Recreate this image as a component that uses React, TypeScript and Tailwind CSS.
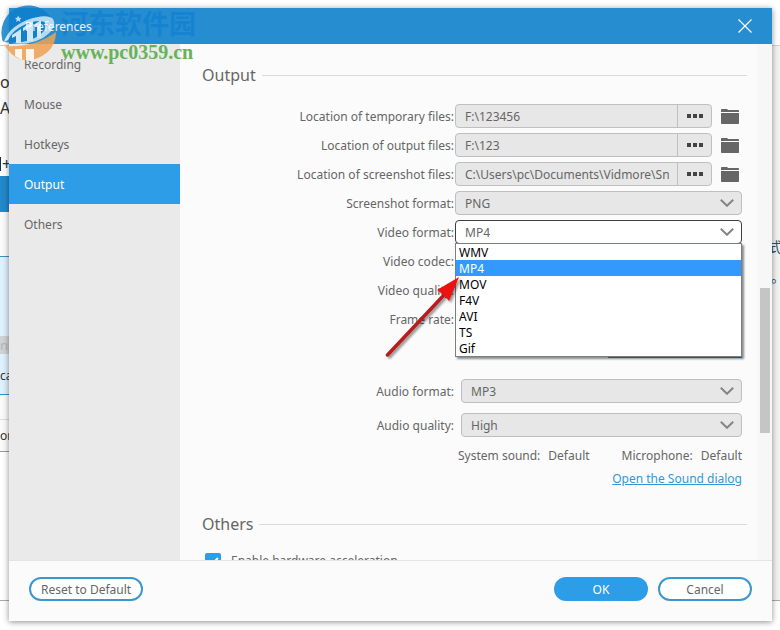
import { useState } from "react";
import type { ReactNode } from "react";

const tabs = ["Recording", "Mouse", "Hotkeys", "Output", "Others"];

const locations = [
  { id: "temp", label: "Location of temporary files:", path: "F:\\123456" },
  { id: "output", label: "Location of output files:", path: "F:\\123" },
  {
    id: "shots",
    label: "Location of screenshot files:",
    path: "C:\\Users\\pc\\Documents\\Vidmore\\Snapshot",
  },
];

const videoFormats = ["WMV", "MP4", "MOV", "F4V", "AVI", "TS", "Gif"];

function Chevron() {
  return (
    <svg
      viewBox="0 0 14 8"
      className="pointer-events-none absolute top-2 right-2 h-2 w-3.5"
      fill="none"
      stroke="#858585"
      strokeWidth="2"
    >
      <path d="M0.8 0.8 7 6.8 13.2 0.8" />
    </svg>
  );
}

function FolderIcon() {
  return (
    <svg viewBox="0 0 18 15" className="h-[15px] w-[18px]" fill="#666666">
      <path d="M0 3V0.8Q0 0 0.8 0H6L7.2 1H17.2Q18 1 18 1.8V3Z" />
      <path d="M0 4h18v10.2q0 .8-.8.8H.8q-.8 0-.8-.8z" />
    </svg>
  );
}

function SectionTitle({ children }: { children: ReactNode }) {
  return (
    <div className="flex items-center gap-1.5 pr-2.5">
      <h2 className="text-[16px] leading-6">{children}</h2>
      <div className="h-px flex-1 bg-[#dadada]" />
    </div>
  );
}

type RowProps = { label: string; htmlFor: string; children?: ReactNode };

function Row({ label, htmlFor, children }: RowProps) {
  return (
    <div className="flex h-6 items-center">
      <label htmlFor={htmlFor} className="w-[252px] shrink-0 pt-0.5 text-right">
        {label}
      </label>
      {children}
    </div>
  );
}

type SelectProps = { id: string; options: string[]; value: string; open?: boolean };

function Select({ id, options, value, open }: SelectProps) {
  const [current, setCurrent] = useState(value);
  return (
    <div className="relative flex-1">
      <select
        id={id}
        value={current}
        onChange={(e) => setCurrent(e.target.value)}
        className={
          open
            ? "block h-6 w-full appearance-none rounded border border-[#3f3f3f] bg-white pt-0.5 pl-[9px] outline-none"
            : "block h-6 w-full appearance-none rounded border border-[#bfbfbf] bg-[#e7e7e7] pt-0.5 pl-[9px] outline-none"
        }
      >
        {options.map((o) => (
          <option key={o}>{o}</option>
        ))}
      </select>
      <Chevron />
      {open && (
        <ul
          role="listbox"
          className="absolute top-[23px] right-0 left-0 z-10 border border-[#7a7f86] bg-white text-black shadow-[2px_2px_2px_rgba(0,0,0,0.45)]"
        >
          {options.map((o) => (
            <li
              key={o}
              role="option"
              aria-selected={o === current}
              onClick={() => setCurrent(o)}
              className="h-4 pt-px pl-[3px] leading-4 aria-selected:bg-[#3399ff] aria-selected:text-white"
            >
              {o}
            </li>
          ))}
        </ul>
      )}
    </div>
  );
}

// Parts of the main window that stick out behind the dialog
function Backdrop() {
  return (
    <div className="absolute inset-0 overflow-hidden text-[13px] whitespace-nowrap text-[#333]">
      <div className="absolute inset-x-0 top-[45px] h-px bg-[#cfcfcf]" />
      <span className="absolute top-[72px] left-0 text-[16px] leading-5">o</span>
      <span className="absolute top-[98px] left-0 text-[16px] leading-5">A</span>
      <span className="absolute top-[154px] left-0.5 text-[16px] leading-5">+</span>
      <div className="absolute top-[157px] left-0 h-3.5 w-px bg-[#1d2b5c]" />
      <div className="absolute top-[176px] left-0 h-9 w-4 bg-[#2289cc]" />
      <div className="absolute top-[212px] left-0 h-[240px] w-4 border-b border-[#999] bg-[#fafafa]">
        <div className="mt-11 h-[139px] border-y border-[#3a8fc4] bg-[#def1fe]">
          <div className="mt-[79px] h-[18px] bg-[#cfd3d6] leading-[18px] text-[#b5b5b5]">nc</div>
          <div className="mt-3 text-[12px] leading-5">ca</div>
        </div>
        <div className="mt-6 border-t border-[#ddd] pt-1.5 text-[12px] leading-5">ord</div>
      </div>
      <div className="absolute inset-x-0 top-[600px] h-px bg-[#a9a9a9]" />
      <div className="absolute top-[46px] right-0 h-[554px] w-2 bg-[#f2f2f2]" />
      <span className="absolute top-[236px] left-[768px] font-['Noto_Sans_CJK_SC',sans-serif] text-[14px] leading-5 text-[#2f4f66]">
        式
      </span>
      <span className="absolute top-[266px] left-[771px] font-['Noto_Sans_CJK_SC',sans-serif] text-[14px] leading-5 text-[#2f4f66]">
        。
      </span>
    </div>
  );
}

function Watermark() {
  return (
    <div className="pointer-events-none absolute top-0 left-0 z-20">
      <svg viewBox="0 0 60 64" className="absolute top-0 left-0 h-16 w-[60px] opacity-85">
        <path d="M2 38A27 27 0 0 1 46 12Q53 17 54 28L38 41 12 43 5 42Q2 42 2 38Z" fill="#0f80cb" />
        <path d="M5 46Q34 48 56 32 56 50 38 58 18 66 5 46Z" fill="#f0a152" />
        <path
          d="M4 42Q8 28 27 20 47 13 53 19 58 28 43 38 28 46 12 43 30 42 40 35 48 28 46 23 41 19 28 23 12 30 8 40Z"
          fill="#cfe8f8"
        />
        <path d="M12 35 21 29V43H16V36L12 38Z" fill="#edf7fe" />
        <path d="M23 28 33 20V41H27V29L23 31Z" fill="#edf7fe" />
        <path d="M35 24 41 20V38H37V27H35Z" fill="#edf7fe" />
        <path d="M15 49H22V60L15 56ZM26 49H34V61H26Z" fill="#fff7ee" />
        <path d="m18 15.5 1.2 2.2 2.4.2-1.8 1.6.6 2.4-2.2-1.3-2 1.3.5-2.4-1.8-1.6 2.4-.2z" fill="#d8edfa" />
      </svg>
      <div className="pt-1.5 pl-[61px] whitespace-nowrap">
        <div className="font-['Noto_Sans_CJK_SC',sans-serif] text-[27px] leading-[34px] font-bold text-[#0f7fd4]/70">
          河东软件园
        </div>
        <div className="font-['Liberation_Serif',serif] text-[20px] leading-6 font-bold text-[#67b25a]">
          www.pc0359.cn
        </div>
      </div>
    </div>
  );
}

export default function App() {
  const [tab, setTab] = useState("Output");

  return (
    <main className="relative h-screen bg-white pt-2 pr-2 pb-[9px] pl-[9px] font-['Noto_Sans',sans-serif] text-[12px] leading-4 text-[#666]">
      <Backdrop />
      <div
        role="dialog"
        aria-label="Preferences"
        className="relative flex h-full flex-col bg-[#fbfbfb] shadow-[0_1px_6px_rgba(0,0,0,0.45)]"
      >
        <header className="flex h-9 shrink-0 items-center justify-between bg-[#258dd0] pr-5 pl-4 text-white">
          <h1 className="relative z-30 pt-0.5 text-white/90">Preferences</h1>
          <button aria-label="Close">
            <svg viewBox="0 0 14 14" className="size-3.5" stroke="white" strokeWidth="1.2">
              <path d="M0.5 0.5 13.5 13.5M13.5 0.5 0.5 13.5" />
            </svg>
          </button>
        </header>

        <div className="flex min-h-0 flex-1">
          <nav className="flex w-[171px] shrink-0 flex-col bg-[#eaeaea]">
            {tabs.map((t) => (
              <button
                key={t}
                onClick={() => setTab(t)}
                className={
                  t === tab
                    ? "h-10 bg-[#2d9de8] pt-0.5 pl-[15px] text-left text-white"
                    : "h-10 pt-0.5 pl-[15px] text-left"
                }
              >
                {t}
              </button>
            ))}
          </nav>

          <section className="min-w-0 flex-1 overflow-hidden pt-[19px] pl-[22px]">
            <SectionTitle>Output</SectionTitle>

            <div className="mt-[17px] flex flex-col gap-[5px] pr-[18px]">
              {locations.map(({ id, label, path }) => (
                <Row key={id} label={label} htmlFor={id}>
                  <div className="ml-px flex h-6 min-w-0 flex-1 rounded border border-[#bfbfbf] bg-[#e7e7e7]">
                    <input
                      id={id}
                      type="text"
                      readOnly
                      value={path}
                      className="mr-2 ml-[9px] min-w-0 flex-1 bg-transparent pt-0.5 outline-none"
                    />
                    <button
                      aria-label="Browse"
                      className="flex w-[34px] items-center justify-center gap-0.5 border-l border-[#bfbfbf]"
                    >
                      <span className="size-1 bg-[#444]" />
                      <span className="size-1 bg-[#444]" />
                      <span className="size-1 bg-[#444]" />
                    </button>
                  </div>
                  <button aria-label="Open folder" className="ml-[9px]">
                    <FolderIcon />
                  </button>
                </Row>
              ))}
            </div>

            <div className="mt-[5px] flex flex-col gap-[5px] pr-[15px]">
              <Row label="Screenshot format:" htmlFor="shot-format">
                <div className="ml-px flex flex-1">
                  <Select id="shot-format" options={["PNG", "JPG", "BMP"]} value="PNG" />
                </div>
              </Row>
              <Row label="Video format:" htmlFor="video-format">
                <div className="ml-px flex flex-1">
                  <Select id="video-format" options={videoFormats} value="MP4" open />
                </div>
              </Row>
              <Row label="Video codec:" htmlFor="video-codec" />
              <Row label="Video quality:" htmlFor="video-quality" />
              <Row label="Frame rate:" htmlFor="frame-rate" />
            </div>

            {/* mostly hidden by the open format list, only its underline shows */}
            <div className="mt-2.5 flex h-[17px] items-end justify-end pr-[15px]">
              <div className="h-0.5 w-[134px] bg-[#3398d6]" />
            </div>

            <div className="mt-[21px] flex flex-col gap-2.5 pr-[15px]">
              <Row label="Audio format:" htmlFor="audio-format">
                <div className="ml-[7px] flex flex-1">
                  <Select id="audio-format" options={["MP3", "AAC", "WMA"]} value="MP3" />
                </div>
              </Row>
              <Row label="Audio quality:" htmlFor="audio-quality">
                <div className="ml-[7px] flex flex-1">
                  <Select id="audio-quality" options={["High", "Medium", "Low"]} value="High" />
                </div>
              </Row>
            </div>

            <div className="mt-[11px] flex justify-end gap-8 pr-[15px]">
              <p className="flex gap-2">
                <span>System sound:</span>
                <span>Default</span>
              </p>
              <p className="flex gap-2">
                <span>Microphone:</span>
                <span>Default</span>
              </p>
            </div>
            <div className="mt-[7px] pr-[15px] text-right">
              <a href="#" className="text-[#3398d6] underline">
                Open the Sound dialog
              </a>
            </div>

            <div className="mt-[25px]">
              <SectionTitle>Others</SectionTitle>
            </div>
            <label className="mt-[17px] ml-[3px] flex items-center gap-2.5">
              <span className="relative size-4">
                <input
                  type="checkbox"
                  defaultChecked
                  className="block size-4 appearance-none rounded-xs bg-[#2d9de8]"
                />
                <svg
                  viewBox="0 0 16 16"
                  className="pointer-events-none absolute inset-0"
                  fill="none"
                  stroke="white"
                  strokeWidth="2"
                >
                  <path d="m3 8 3.5 3.5L13 5" />
                </svg>
              </span>
              Enable hardware acceleration
            </label>
          </section>

          <div className="w-[15px] shrink-0 bg-[#f7f7f7]">
            <div className="mt-[244px] ml-[3px] h-[145px] w-2.5 bg-[#c5c5c5]" />
          </div>
        </div>

        <footer className="flex h-[61px] shrink-0 items-center border-t border-[#e4e4e4] px-5 pb-1">
          <button className="h-6 rounded-full border-2 border-[#3b97d0] bg-white px-2.5 pt-px">
            Reset to Default
          </button>
          <button className="ml-auto h-6 w-[94px] rounded-full bg-[#2d9de8] pt-px text-white">
            OK
          </button>
          <button className="ml-2.5 h-6 w-[94px] rounded-full border-2 border-[#3b97d0] bg-white pt-px">
            Cancel
          </button>
        </footer>
      </div>

      <svg
        viewBox="0 0 76 82"
        className="pointer-events-none absolute top-[277px] left-[384px] z-20 h-[82px] w-[76px] drop-shadow-[2px_2px_1px_rgba(0,0,0,0.4)]"
      >
        <path d="M3.5 78 60 18" stroke="#b81c1c" strokeWidth="3.5" strokeLinecap="round" />
        <path d="M75 0 65 24 60 18 53 13Z" fill="#ee1111" />
      </svg>

      <Watermark />
    </main>
  );
}
